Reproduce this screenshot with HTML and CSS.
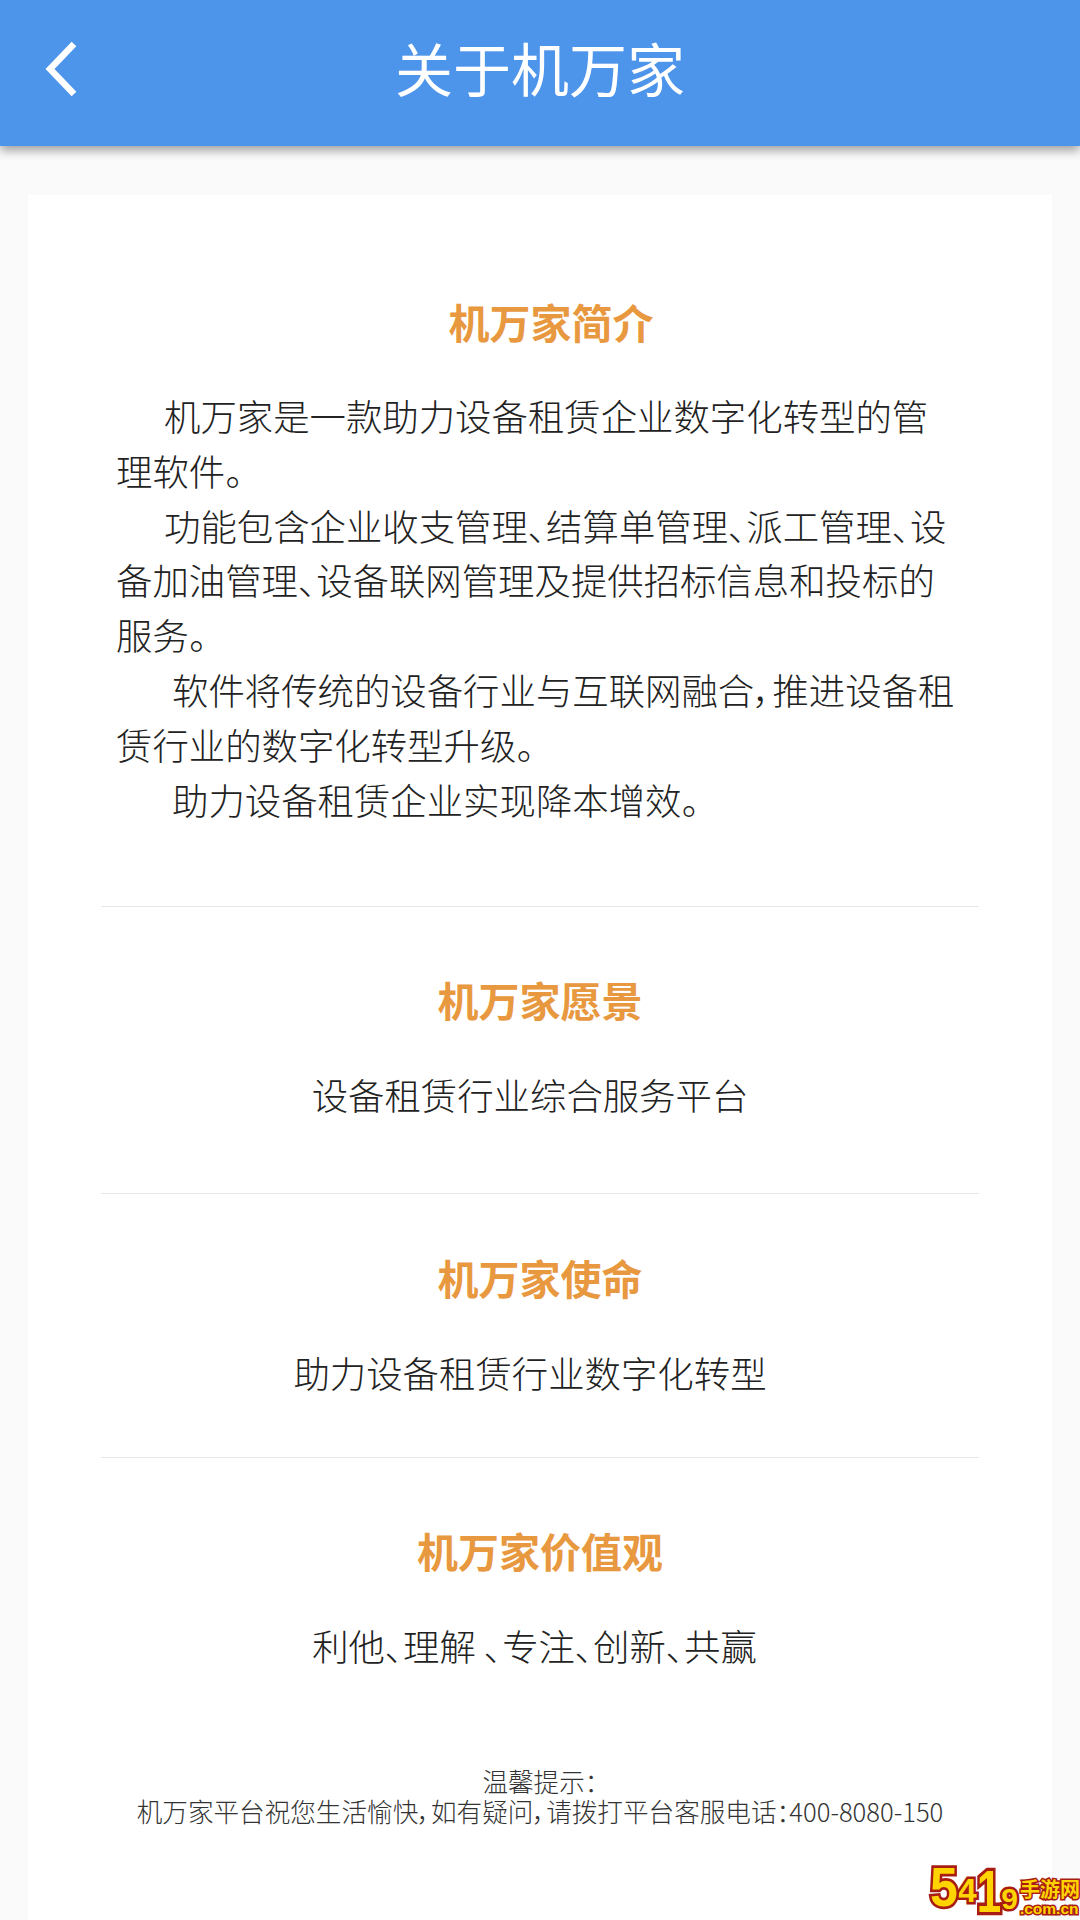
FILE: index.html
```html
<!DOCTYPE html>
<html lang="zh-CN">
<head>
<meta charset="utf-8">
<title>关于机万家</title>
<link rel="stylesheet" href="styles.css">
</head>
<body>
<header class="topbar">
  <svg class="back" viewBox="0 0 34 56" width="34" height="56"><path d="M30 3 L6 28 L30 53" fill="none" stroke="#fff" stroke-width="6.5"/></svg>
  <h1 class="topbar-title">关于机万家</h1>
</header>
<main class="card">
  <section class="block block-intro">
    <h2 class="heading heading-shift">机万家简介</h2>
    <div class="intro">
      <p class="para">机万家是一款助力设备租赁企业数字化转型的管理软件。</p>
      <p class="para">功能包含企业收支管理、结算单管理、派工管理、设备加油管理、设备联网管理及提供招标信息和投标的服务。</p>
      <p class="para para-wide">软件将传统的设备行业与互联网融合，推进设备租赁行业的数字化转型升级。</p>
      <p class="para para-wide">助力设备租赁企业实现降本增效。</p>
    </div>
  </section>
  <section class="block block-vision">
    <h2 class="heading">机万家愿景</h2>
    <p class="line line-shift">设备租赁行业综合服务平台</p>
  </section>
  <section class="block block-mission">
    <h2 class="heading">机万家使命</h2>
    <p class="line line-shift">助力设备租赁行业数字化转型</p>
  </section>
  <section class="block block-values">
    <h2 class="heading">机万家价值观</h2>
    <p class="line line-small-shift">利他、理解 、专注、创新、共赢</p>
  </section>
  <footer class="note">
    <p class="note-line">温馨提示：</p>
    <p class="note-line">机万家平台祝您生活愉快，如有疑问，请拨打平台客服电话：400-8080-150</p>
  </footer>
</main>
<div class="mark">
  <span class="digit digit-five">5</span><span class="digit digit-four">4</span><span class="digit digit-one">1</span><span class="digit digit-nine">9</span>
  <span class="mark-side"><span class="mark-cn">手游网</span><span class="mark-url">.com.cn</span></span>
</div>
</body>
</html>
```
FILE: styles.css
```css
* { box-sizing: border-box; margin: 0; padding: 0; }
html, body { height: 1920px; overflow: hidden; }
body {
  background: #fafafb;
  font-family: "Noto Sans CJK SC", "Noto Sans", sans-serif;
  font-feature-settings: "palt";
  color: #222;
  position: relative;
}
.topbar {
  height: 146px;
  background: #4d94eb;
  box-shadow: 0 5px 9px rgba(0, 0, 0, .34);
  display: flex;
  align-items: center;
  justify-content: center;
  position: relative;
}
.back { position: absolute; left: 44px; top: 41px; }
.topbar-title { color: #fff; font-size: 58px; font-weight: 400; line-height: 1; margin-top: -13px; }
.card {
  margin: 49px 28px 0;
  height: 1725px;
  background: #fff;
  padding: 0 73px;
}
.block { border-bottom: 1px solid #e6e6e6; text-align: center; }
.block-intro { height: 712px; padding-top: 100px; }
.block-vision { height: 287px; padding-top: 66px; }
.block-mission { height: 264px; padding-top: 57px; }
.block-values { height: 252px; padding-top: 66px; border-bottom: 0; }
.heading {
  font-size: 41px;
  font-weight: 700;
  line-height: 52px;
  color: #e8983f;
}
.heading-shift { padding-left: 22px; }
.intro { margin-top: 41px; padding: 0 18px 0 15px; text-align: left; }
.para { font-size: 36.4px; line-height: 54.8px; text-indent: 48px; font-weight: 300; }
.para-wide { text-indent: 56px; }
.line { font-size: 36.4px; line-height: 52px; margin-top: 43px; font-weight: 300; }
.block-mission .line { margin-top: 43px; }
.line-shift { padding-right: 20px; }
.line-small-shift { padding-right: 11px; }
.note { text-align: center; color: #333; font-size: 25.6px; line-height: 30px; margin-top: 56px; font-weight: 300; }
.note-line { white-space: nowrap; }
.mark {
  position: absolute;
  left: 930px;
  top: 1864px;
  width: 150px;
  height: 56px;
  display: flex;
  align-items: flex-start;
  font-family: "Liberation Sans", sans-serif;
  font-weight: 700;
  color: #ffd400;
}
.digit {
  line-height: 1;
  transform-origin: top;
  -webkit-text-stroke: 5px #a81c12;
  paint-order: stroke fill;
}
.digit-five { font-size: 50px; margin-top: -4px; transform: scaleY(1.1); }
.digit-four { font-size: 34px; margin-top: 9px; }
.digit-one { font-size: 44px; margin-top: -2px; transform: scaleY(1.35); }
.digit-nine { font-size: 30px; margin-top: 20px; }
.mark-side { display: flex; flex-direction: column; margin-left: 2px; margin-top: 12px; }
.mark-cn {
  font-family: "Noto Sans CJK SC", sans-serif;
  font-size: 20px;
  line-height: 25px;
  white-space: nowrap;
  -webkit-text-stroke: 3px #a81c12;
  paint-order: stroke fill;
}
.mark-url {
  font-size: 15.5px;
  line-height: 15px;
  white-space: nowrap;
  -webkit-text-stroke: 3px #a81c12;
  paint-order: stroke fill;
}
```
